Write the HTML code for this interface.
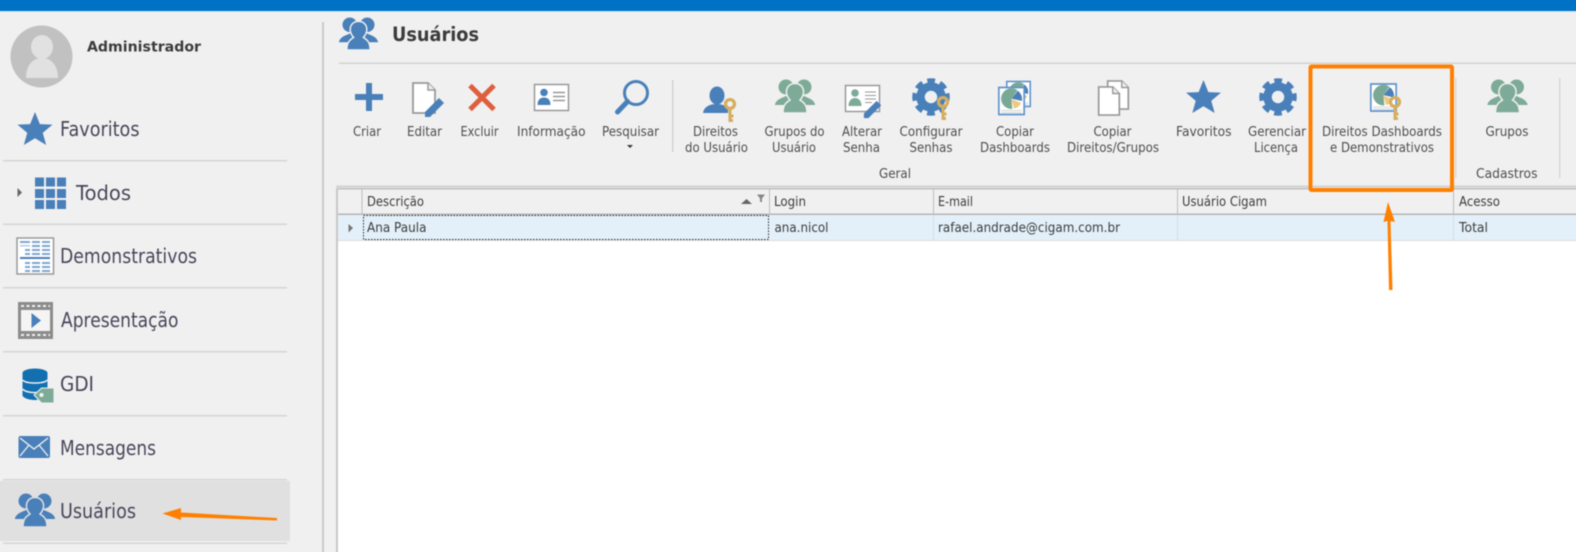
<!DOCTYPE html>
<html lang="pt-BR"><head><meta charset="utf-8"><title>Usuários</title>
<style>
html,body{margin:0;padding:0;background:#f0f0f0;width:1576px;height:552px;overflow:hidden;position:relative}
svg{display:block;filter:blur(.4px);position:absolute;left:-10px;top:-10px}
text{font-family:"DejaVu Sans","Liberation Sans",sans-serif;fill:#4e4e4e;font-size:13px}
.s{font-size:20.5px;fill:#47465a}
.g{fill:#3c3c3c}
.b{font-weight:bold;fill:#3c3c3c}
</style></head><body>
<svg xmlns="http://www.w3.org/2000/svg" width="1596" height="572" viewBox="-10 -10 1596 572">
<defs>
<symbol id="users" viewBox="0 0 40 34">
<circle cx="11" cy="8" r="7.500" stroke="none"/><circle cx="29" cy="8" r="7.500" stroke="none"/>
<path d="M0 25C2 20 7 19 11 17L29 17C33 19 38 20 40 25L40 26L0 26Z" stroke="none"/>
<path d="M20 4.500C26 4.500 29 9 28.500 14C28 17 26.500 19.500 25 21C28 23 32 25 32 34H8C8 25 12 23 15 21C13.500 19.500 12 17 11.500 14C11 9 14 4.500 20 4.500Z" stroke-width="1.500"/>
</symbol>
<symbol id="gear" viewBox="0 0 38 38">
<circle cx="19" cy="19" r="10.500" fill="none" stroke="#4a80ba" stroke-width="8.500"/>
<circle cx="19" cy="19" r="16" fill="none" stroke="#4a80ba" stroke-width="5.500" stroke-dasharray="7.500 5.070" stroke-dashoffset="3.750"/>
</symbol>
<symbol id="key" viewBox="0 0 14 24">
<path d="M7 10V22.500L10 22.500M7 18H10.500" fill="none" stroke="#d6ad5e" stroke-width="3"/>
<circle cx="7" cy="6" r="4.500" fill="none" stroke="#d6ad5e" stroke-width="3.200"/>
</symbol>
<symbol id="star" viewBox="0 0 36 34">
<path d="M18 0L23 12.500L36 13L26 21.500L29.500 34L18 27L6.500 34L10 21.500L0 13L13 12.500Z" fill="#4a80ba"/>
</symbol>
<symbol id="pen" viewBox="0 0 22 22">
<path d="M1 16L15 2L20 7L6 21L1 21Z" fill="#4a80ba"/>
</symbol>
<symbol id="doc" viewBox="0 0 24 32">
<path d="M1 1H16L23 8V31H1Z" fill="#fff" stroke="#999" stroke-width="1.800"/>
<path d="M16 1V8H23" fill="#eee" stroke="#999" stroke-width="1.500"/>
</symbol>
<symbol id="pie" viewBox="0 0 34 36">
<rect x="1" y="1" width="32" height="34" fill="#fff" stroke="#5f93cc" stroke-width="2.200"/>
<path d="M17 15L24.500 4.500A13 13 0 1 0 18 28Z" fill="#79a994"/>
<path d="M17 15L25 5A13 13 0 0 1 30 18Z" fill="#4a80ba"/>
<path d="M17 15.500L29 20.500A12 12 0 0 1 20 27.500Z" fill="#f0c87c"/>
<path d="M4 30H30M4 32.500H30" stroke="#c8c8c8"/>
</symbol>
</defs>

<rect x="-10" y="-10" width="1596" height="572" fill="#f0f0f0"/>
<rect x="-10" y="-10" width="1596" height="21" fill="#0072c6"/>
<rect x="-10" y="11" width="1596" height="1" fill="#cfe3f3"/>

<!-- sidebar -->
<rect x="-10" y="481" width="300" height="60" fill="#e0e0e0"/>
<g fill="#d5d5d5">
<rect x="3" y="160" width="284" height="1.500"/><rect x="3" y="223.500" width="284" height="1.500"/><rect x="3" y="287" width="284" height="1.500"/><rect x="3" y="351" width="284" height="1.500"/><rect x="3" y="415" width="284" height="1.500"/><rect x="3" y="479" width="284" height="1.500"/><rect x="3" y="542.500" width="284" height="1.500"/>
</g>
<rect x="322" y="22" width="2" height="540" fill="#cbcbcb"/>

<circle cx="41.500" cy="56.500" r="31" fill="#c1c1c1"/>
<ellipse cx="42" cy="47" rx="11" ry="12" fill="#e1e1e1"/>
<path d="M26 78C26 65 33 58 42 58C51 58 58 65 58 78Z" fill="#e1e1e1"/>
<text class="b" x="87" y="51.500" style="font-size:14.500px" textLength="114" lengthAdjust="spacingAndGlyphs">Administrador</text>

<use href="#star" x="17" y="112" width="36" height="33"/>
<text class="s" x="60" y="136" textLength="79.500" lengthAdjust="spacingAndGlyphs">Favoritos</text>

<path d="M17.500 188L22 192.500L17.500 197Z" fill="#666"/>
<g fill="#4a80ba">
<rect x="35" y="177.500" width="9" height="9"/><rect x="46" y="177.500" width="9" height="9"/><rect x="57" y="177.500" width="9" height="9"/>
<rect x="35" y="189" width="9" height="9"/><rect x="46" y="189" width="9" height="9"/><rect x="57" y="189" width="9" height="9"/>
<rect x="35" y="200" width="9" height="9"/><rect x="46" y="200" width="9" height="9"/><rect x="57" y="200" width="9" height="9"/>
</g>
<text class="s" x="76" y="200" textLength="55" lengthAdjust="spacingAndGlyphs">Todos</text>

<rect x="17" y="238" width="36.500" height="36" fill="#fff" stroke="#999" stroke-width="1.500"/>
<g fill="#7fa6d0">
<rect x="20" y="241" width="10" height="2"/><rect x="20" y="245" width="10" height="1.500" opacity=".6"/><rect x="25" y="249" width="5" height="2"/><rect x="25" y="253" width="5" height="2"/>
<rect x="25" y="262" width="5" height="2"/><rect x="25" y="266" width="5" height="2"/><rect x="25" y="270" width="5" height="2"/>
<rect x="32" y="241" width="8" height="2"/><rect x="32" y="245" width="8" height="2"/><rect x="32" y="249" width="8" height="2"/><rect x="32" y="253" width="8" height="2"/>
<rect x="32" y="262" width="8" height="2"/><rect x="32" y="266" width="8" height="2"/><rect x="32" y="270" width="8" height="2"/>
<rect x="42" y="241" width="8" height="2"/><rect x="42" y="245" width="8" height="2"/><rect x="42" y="249" width="8" height="2"/><rect x="42" y="253" width="8" height="2"/>
<rect x="42" y="262" width="8" height="2"/><rect x="42" y="266" width="8" height="2"/><rect x="42" y="270" width="8" height="2"/>
</g>
<rect x="20" y="257" width="30" height="2" fill="#4a80ba"/>
<text class="s" x="60" y="263" textLength="137" lengthAdjust="spacingAndGlyphs">Demonstrativos</text>

<rect x="18" y="302" width="35" height="37" fill="#8c8c8c"/>
<rect x="21" y="310" width="29" height="21" fill="#f4f4f4"/>
<path d="M21 306H50M21 335H50" stroke="#f0f0f0" stroke-width="2" stroke-dasharray="3 2.500"/>
<path d="M31.500 313L41 320.500L31.500 328Z" fill="#4a80ba"/>
<text class="s" x="61" y="327" textLength="117.500" lengthAdjust="spacingAndGlyphs">Apresentação</text>

<path d="M22.500 373V395C22.500 398 29 400 35 400C41 400 47.500 398 47.500 395V373Z" fill="#1270b0"/>
<ellipse cx="35" cy="373" rx="12.500" ry="4.500" fill="#1270b0"/>
<path d="M22.500 380C26 384 44 384 47.500 380M22.500 389C26 393 36 393 40 392" fill="none" stroke="#f0f0f0" stroke-width="1.500"/>
<path d="M34 395L41.500 388H54V403H41.500Z" fill="#7dab97" stroke="#f0f0f0"/>
<circle cx="41.500" cy="395" r="2" fill="#f4f4f4"/>
<text class="s" x="60" y="391" textLength="34" lengthAdjust="spacingAndGlyphs">GDI</text>

<rect x="18.500" y="436" width="31.500" height="22" rx="2" fill="#4a80ba"/>
<path d="M20 438L34 449L48 438M20 456L29 445M48 456L39 445" fill="none" stroke="#f0f0f0" stroke-width="1.300"/>
<text class="s" x="60" y="455" textLength="96" lengthAdjust="spacingAndGlyphs">Mensagens</text>

<use href="#users" x="15" y="493" width="40" height="34" fill="#4a80ba" stroke="#e0e0e0"/>
<text class="s" x="60" y="518" textLength="76" lengthAdjust="spacingAndGlyphs">Usuários</text>
<path d="M162.500 513.500L181 508L181 512.500L277 518L277 520.500L181 517L181 520Z" fill="#ff8000"/>

<!-- header -->
<use href="#users" x="339" y="17" width="39" height="33" fill="#4a80ba" stroke="#f0f0f0"/>
<text class="b" x="392" y="41" style="font-size:19.500px" textLength="87" lengthAdjust="spacingAndGlyphs">Usuários</text>
<rect x="339" y="62.500" width="1247" height="1.500" fill="#d2d2d2"/>

<!-- ribbon icons -->
<path d="M369 83V111M355 97H383" stroke="#4a80ba" stroke-width="6" fill="none"/>
<use href="#doc" x="412" y="82" width="24" height="32"/>
<use href="#pen" x="424" y="96" width="22" height="22"/>
<path d="M470 85.500L494 109.500M494 85.500L470 109.500" stroke="#de5f3e" stroke-width="5" fill="none"/>

<rect x="534.500" y="84.500" width="34" height="26" fill="#fff" stroke="#999" stroke-width="1.500"/>
<circle cx="544" cy="92.500" r="3.800" fill="#4a80ba"/>
<path d="M537.500 105C537.500 99 541 97.500 544 97.500C547 97.500 550.500 99 550.500 105Z" fill="#4a80ba"/>
<path d="M553 92.500H565M553 96.500H565M553 100.500H565" stroke="#999" stroke-width="1.500"/>

<circle cx="636" cy="93" r="11.500" fill="none" stroke="#4a80ba" stroke-width="3"/>
<path d="M627.500 101.500L617.500 112" stroke="#4a80ba" stroke-width="5" stroke-linecap="round"/>
<path d="M627 145L633 145L630 148Z" fill="#333"/>

<rect x="672" y="80" width="1.500" height="72" fill="#d2d2d2"/>

<ellipse cx="717" cy="95.500" rx="7.500" ry="9" fill="#4a80ba"/>
<path d="M703 113C704 106 711 104 717 104C722 104 726 106 728 108L728 113Z" fill="#4a80ba"/>
<use href="#key" x="723" y="98" width="14" height="24"/>

<use href="#users" x="775" y="79" width="40" height="34" fill="#7dab97" stroke="#f0f0f0"/>

<rect x="845.500" y="85.500" width="34" height="26" fill="#fff" stroke="#999" stroke-width="1.500"/>
<circle cx="855" cy="93" r="3.800" fill="#7dab97"/>
<path d="M848.500 106C848.500 100 852 98 855 98C858 98 861.500 100 861.500 106Z" fill="#7dab97"/>
<path d="M865 92H876M865 95.500H876M865 99H876M865 102.500H872" stroke="#999"/>
<use href="#pen" x="863" y="99" width="20" height="20"/>

<use href="#gear" x="912" y="78" width="38" height="38"/>
<use href="#key" x="936" y="96" width="14" height="24"/>

<use href="#pie" x="1006" y="80" width="25" height="28"/>
<use href="#pie" x="998" y="86" width="27" height="30"/>

<use href="#doc" x="1106" y="80" width="24" height="30"/>
<use href="#doc" x="1097" y="86" width="24" height="30"/>

<use href="#star" x="1186" y="80" width="35" height="33"/>
<use href="#gear" x="1259" y="78" width="38" height="38"/>

<use href="#pie" x="1370" y="82" width="27" height="31"/>
<use href="#key" x="1388" y="96" width="14" height="24"/>

<use href="#users" x="1487" y="79" width="41" height="34" fill="#7dab97" stroke="#f0f0f0"/>

<rect x="1455" y="78" width="1.500" height="100" fill="#d8d8d8"/>
<rect x="1559" y="78" width="1.500" height="100" fill="#d8d8d8"/>

<!-- ribbon labels -->
<text x="353" y="136" textLength="28" lengthAdjust="spacingAndGlyphs">Criar</text>
<text x="407" y="136" textLength="35" lengthAdjust="spacingAndGlyphs">Editar</text>
<text x="460.500" y="136" textLength="38" lengthAdjust="spacingAndGlyphs">Excluir</text>
<text x="517" y="136" textLength="68.500" lengthAdjust="spacingAndGlyphs">Informação</text>
<text x="602" y="136" textLength="57" lengthAdjust="spacingAndGlyphs">Pesquisar</text>
<text x="693" y="136" textLength="45" lengthAdjust="spacingAndGlyphs">Direitos</text>
<text x="685" y="152" textLength="63" lengthAdjust="spacingAndGlyphs">do Usuário</text>
<text x="764.500" y="136" textLength="60" lengthAdjust="spacingAndGlyphs">Grupos do</text>
<text x="772" y="152" textLength="44" lengthAdjust="spacingAndGlyphs">Usuário</text>
<text x="842" y="136" textLength="40" lengthAdjust="spacingAndGlyphs">Alterar</text>
<text x="843" y="152" textLength="37" lengthAdjust="spacingAndGlyphs">Senha</text>
<text x="899.500" y="136" textLength="63" lengthAdjust="spacingAndGlyphs">Configurar</text>
<text x="909.500" y="152" textLength="43" lengthAdjust="spacingAndGlyphs">Senhas</text>
<text x="879" y="178" textLength="32" lengthAdjust="spacingAndGlyphs">Geral</text>
<text x="996" y="136" textLength="38" lengthAdjust="spacingAndGlyphs">Copiar</text>
<text x="980" y="152" textLength="70" lengthAdjust="spacingAndGlyphs">Dashboards</text>
<text x="1093.500" y="136" textLength="38" lengthAdjust="spacingAndGlyphs">Copiar</text>
<text x="1067" y="152" textLength="92" lengthAdjust="spacingAndGlyphs">Direitos/Grupos</text>
<text x="1176" y="136" textLength="55.500" lengthAdjust="spacingAndGlyphs">Favoritos</text>
<text x="1248" y="136" textLength="58" lengthAdjust="spacingAndGlyphs">Gerenciar</text>
<text x="1254" y="152" textLength="44" lengthAdjust="spacingAndGlyphs">Licença</text>
<text x="1322" y="136" textLength="120" lengthAdjust="spacingAndGlyphs">Direitos Dashboards</text>
<text x="1330" y="152" textLength="104" lengthAdjust="spacingAndGlyphs">e Demonstrativos</text>
<text x="1485.500" y="136" textLength="43" lengthAdjust="spacingAndGlyphs">Grupos</text>
<text x="1476" y="178" textLength="61.500" lengthAdjust="spacingAndGlyphs">Cadastros</text>

<!-- grid -->
<rect x="336" y="185.500" width="1250" height="2" fill="#d2d2d2"/>
<rect x="337" y="189" width="1249" height="373" fill="#fff"/>
<rect x="337" y="189" width="1249" height="25" fill="#f0f0f0"/>
<rect x="337" y="188" width="1249" height="1.500" fill="#c0c0c0"/>
<rect x="336" y="188" width="2" height="374" fill="#c8c8c8"/>
<rect x="338" y="215" width="1248" height="25" fill="#e3f0f9"/>
<rect x="338" y="213.500" width="1248" height="1.500" fill="#b5b5b5"/>
<rect x="338" y="240" width="1248" height="1" fill="#dcdcdc"/>
<g fill="#bdbdbd">
<rect x="361.500" y="189" width="1" height="25"/><rect x="769" y="189" width="1" height="25"/><rect x="933" y="189" width="1" height="25"/><rect x="1177" y="189" width="1" height="25"/><rect x="1453" y="189" width="1" height="25"/>
</g>
<g fill="#d3dde5">
<rect x="933" y="215" width="1" height="25"/><rect x="1177" y="215" width="1" height="25"/><rect x="1453" y="215" width="1" height="25"/>
</g>
<rect x="363.500" y="215.500" width="405" height="24" fill="none" stroke="#222" stroke-width="1" stroke-dasharray="1.500 1.500"/>
<path d="M348.500 224L353 228L348.500 232.500Z" fill="#777"/>
<path d="M741 204L746.500 199L752 204Z" fill="#666"/>
<path d="M757 194.500H765L762 198.500V202H760V198.500Z" fill="#888"/>

<text class="g" x="367" y="206" textLength="57" lengthAdjust="spacingAndGlyphs">Descrição</text>
<text class="g" x="774" y="206" textLength="32" lengthAdjust="spacingAndGlyphs">Login</text>
<text class="g" x="938" y="206" textLength="35" lengthAdjust="spacingAndGlyphs">E-mail</text>
<text class="g" x="1182" y="206" textLength="85" lengthAdjust="spacingAndGlyphs">Usuário Cigam</text>
<text class="g" x="1459" y="206" textLength="41" lengthAdjust="spacingAndGlyphs">Acesso</text>
<text class="g" x="367" y="232" textLength="59.500" lengthAdjust="spacingAndGlyphs">Ana Paula</text>
<text class="g" x="774.500" y="232" textLength="54" lengthAdjust="spacingAndGlyphs">ana.nicol</text>
<text class="g" x="938" y="232" textLength="182" lengthAdjust="spacingAndGlyphs">rafael.andrade@cigam.com.br</text>
<text class="g" x="1459" y="232" textLength="29" lengthAdjust="spacingAndGlyphs">Total</text>

<!-- annotations -->
<rect x="1310.500" y="66.500" width="141.500" height="123.500" fill="none" stroke="#ff8000" stroke-width="4" rx="1"/>
<path d="M1388 202L1395 222L1390.500 221L1392.500 290L1389 290L1387.500 221L1383.500 222Z" fill="#ff8000"/>
</svg>
</body></html>
